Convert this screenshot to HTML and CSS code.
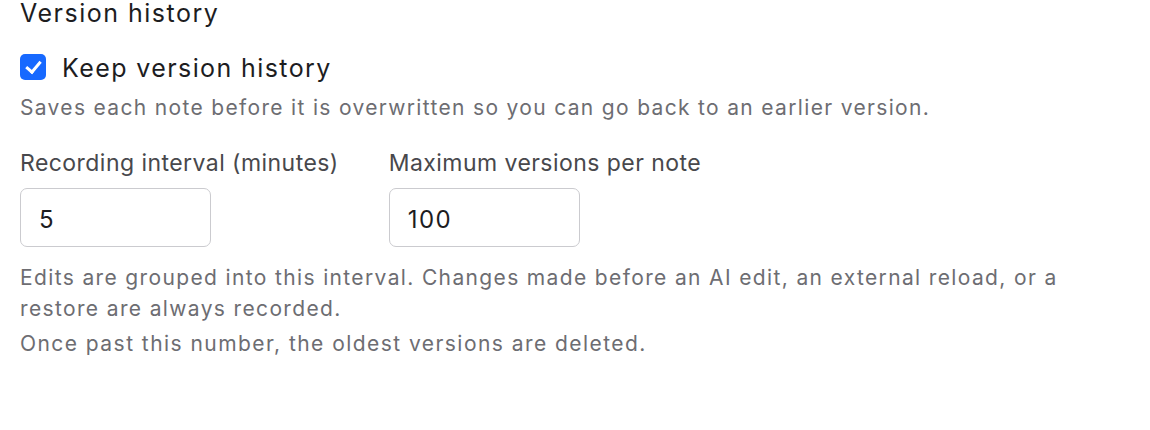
FILE: index.html
```html
<!DOCTYPE html>
<html lang="en">
<head>
<meta charset="utf-8">
<title>Version history</title>
<link rel="stylesheet" href="styles.css">
</head>
<body>
<section class="settings">
  <h2 class="section-title">Version history</h2>
  <label class="check-row">
    <input type="checkbox" class="check" checked>
    <span class="check-label">Keep version history</span>
  </label>
  <p class="desc">Saves each note before it is overwritten so you can go back to an earlier version.</p>
  <div class="fields">
    <div class="field">
      <label class="field-label" for="interval">Recording interval (minutes)</label>
      <input id="interval" class="num-input" type="text" value="5">
    </div>
    <div class="field">
      <label class="field-label" for="maxv">Maximum versions per note</label>
      <input id="maxv" class="num-input" type="text" value="100">
    </div>
  </div>
  <p class="help">Edits are grouped into this interval. Changes made before an AI edit, an external reload, or a restore are always recorded.</p>
  <p class="help help-second">Once past this number, the oldest versions are deleted.</p>
</section>
</body>
</html>
```
FILE: styles.css
```css
html, body {
  margin: 0;
  padding: 0;
  background: #ffffff;
}
body {
  font-family: Inter, "Noto Sans", "Liberation Sans", sans-serif;
  color: #1d1d1f;
}
.settings {
  padding: 0 20px;
  width: 1110px;
  box-sizing: content-box;
}
.section-title {
  margin: 0;
  font-size: 25px;
  line-height: 26px;
  letter-spacing: 1.5px;
  font-weight: 400;
  color: #1d1d1f;
}
.check-row {
  display: flex;
  align-items: flex-start;
  gap: 16px;
  margin-top: 27px;
  cursor: pointer;
}
.check {
  appearance: none;
  -webkit-appearance: none;
  margin: 1px 0 0 0;
  width: 26px;
  height: 26px;
  border-radius: 5px;
  background: #1769ff;
  position: relative;
  flex: none;
}
.check:checked::after {
  content: "";
  position: absolute;
  left: 8.5px;
  top: 3.5px;
  width: 6px;
  height: 12px;
  border: solid #ffffff;
  border-width: 0 3.5px 3.5px 0;
  transform: rotate(40deg);
}
.check-label {
  font-size: 25px;
  line-height: 30px;
  letter-spacing: 1.4px;
  color: #1d1d1f;
}
.desc {
  margin: 11px 0 0;
  font-size: 21px;
  line-height: 28px;
  letter-spacing: 1.33px;
  color: #6d6d72;
}
.fields {
  display: flex;
  gap: 50px;
  margin-top: 27px;
}
.field {
  display: flex;
  flex-direction: column;
  gap: 11px;
}
.field-label {
  font-size: 23px;
  line-height: 28px;
  letter-spacing: 0.45px;
  color: #48484c;
}
.num-input {
  width: 191px;
  height: 59px;
  box-sizing: border-box;
  border: 1.5px solid #cbcbcf;
  border-radius: 7px;
  padding: 3px 18px 0;
  font-family: inherit;
  font-size: 24px;
  letter-spacing: 1.5px;
  color: #1d1d1f;
  background: #ffffff;
  outline: none;
}
.help {
  margin: 15px 0 0;
  font-size: 21px;
  line-height: 31px;
  letter-spacing: 1.36px;
  color: #6d6d72;
}
.help-second {
  margin-top: 4px;
  letter-spacing: 1.45px;
}
```
